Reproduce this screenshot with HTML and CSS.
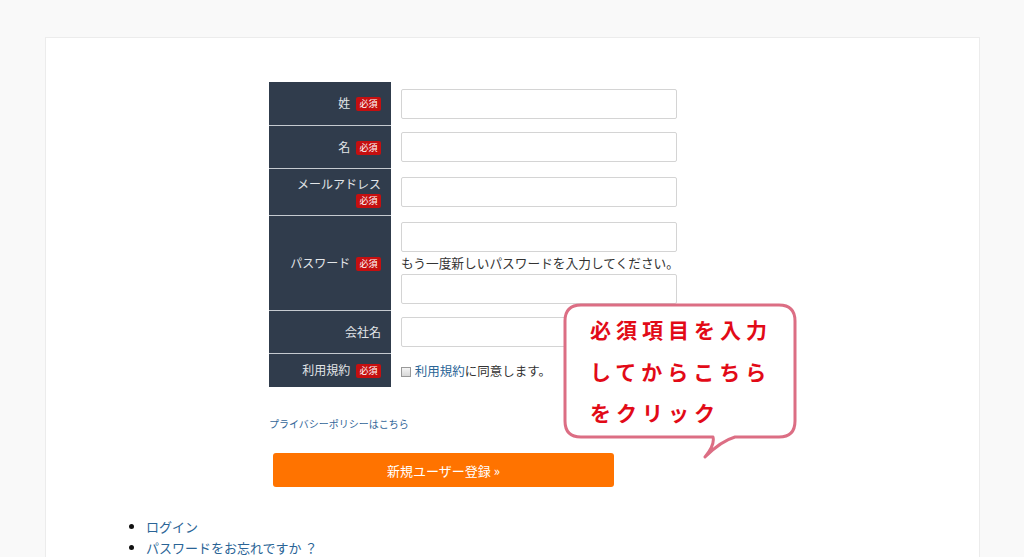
FILE: index.html
```html
<!DOCTYPE html>
<html lang="ja">
<head>
<meta charset="utf-8">
<title>新規ユーザー登録</title>
<link rel="stylesheet" href="styles.css">
</head>
<body>
<div class="card">
  <div class="form-wrap">
    <table class="reg-table">
      <tr>
        <th>姓 <span class="req">必須</span></th>
        <td><input class="text-input" type="text"></td>
      </tr>
      <tr>
        <th>名 <span class="req">必須</span></th>
        <td><input class="text-input" type="text"></td>
      </tr>
      <tr>
        <th>メールアドレス <span class="req">必須</span></th>
        <td><input class="text-input" type="text"></td>
      </tr>
      <tr>
        <th>パスワード <span class="req">必須</span></th>
        <td>
          <input class="text-input" type="password">
          <p class="hint">もう一度新しいパスワードを入力してください。</p>
          <input class="text-input" type="password">
        </td>
      </tr>
      <tr>
        <th>会社名</th>
        <td><input class="text-input" type="text"></td>
      </tr>
      <tr>
        <th>利用規約 <span class="req">必須</span></th>
        <td class="agree"><span class="check"></span> <a class="link" href="#">利用規約</a>に同意します。</td>
      </tr>
    </table>
    <p class="privacy"><a href="#">プライバシーポリシーはこちら</a></p>
    <button class="submit" type="button">新規ユーザー登録 »</button>

    <div class="bubble">
      <svg class="bubble-shape" width="236" height="158" viewBox="0 0 236 158">
        <path d="M18 2 H216 Q232 2 232 18 V118 Q232 134 216 134 H172 Q158 138 142 154 Q152 142 150 134 H18 Q2 134 2 118 V18 Q2 2 18 2 Z" fill="#fff" stroke="#dc6e84" stroke-width="3" stroke-linejoin="round"/>
      </svg>
      <div class="bubble-text">必須項目を入力<br>してからこちら<br>をクリック</div>
    </div>
  </div>
  <ul class="links">
    <li><a href="#">ログイン</a></li>
    <li><a href="#">パスワードをお忘れですか ？</a></li>
  </ul>
</div>
</body>
</html>
```

FILE: styles.css
```css
html, body {
  margin: 0;
  padding: 0;
  background: #f9f9f9;
  font-family: "Noto Sans CJK JP", "Noto Sans", sans-serif;
  color: #333;
}

.card {
  margin: 37px 44px 0 45px;
  background: #fff;
  border: 1px solid #ececec;
  padding-top: 44px;
  min-height: 560px;
  box-sizing: border-box;
}

.form-wrap {
  position: relative;
  margin-left: 223px;
  width: 420px;
}

.reg-table {
  border-collapse: collapse;
  border-spacing: 0;
}

.reg-table th {
  width: 102px;
  background: #303c4c;
  color: #e2e5e8;
  font-weight: normal;
  font-size: 12px;
  line-height: 16px;
  text-align: right;
  padding: 7px 10px;
  border-bottom: 1px solid #c5cad0;
  vertical-align: middle;
}

.reg-table tr:last-child th {
  border-bottom: none;
}

.reg-table td {
  padding: 7px 10px 6px;
  vertical-align: middle;
  font-size: 12.5px;
}

.req {
  display: inline-block;
  background: #c50f10;
  color: #fff;
  font-size: 9px;
  line-height: 14px;
  padding: 0 3.5px;
  border-radius: 2px;
  margin-left: 3px;
  vertical-align: 1px;
}

.text-input {
  display: block;
  box-sizing: border-box;
  width: 276px;
  height: 30px;
  border: 1px solid #d4d4d4;
  border-radius: 2px;
  margin: 0;
  background: #fff;
}

.hint {
  margin: 0;
  font-size: 12.7px;
  line-height: 22px;
  color: #333;
  white-space: nowrap;
}

.agree {
  line-height: 21px;
  white-space: nowrap;
}

.check {
  display: inline-block;
  width: 8px;
  height: 8px;
  border: 1px solid #999;
  background: linear-gradient(#f4f4f4, #d8d8d8);
  vertical-align: -1px;
  margin-right: 1px;
}

.link {
  color: #2a6496;
  text-decoration: none;
}

.privacy {
  margin: 30px 0 0 0;
  font-size: 10px;
  line-height: 14px;
}

.privacy a {
  color: #336699;
  text-decoration: none;
}

.submit {
  display: block;
  margin: 22px 0 0 4px;
  width: 341px;
  height: 34px;
  border: none;
  border-radius: 3px;
  background: #ff7300;
  color: #fff;
  font-family: "Noto Sans CJK JP", "Noto Sans", sans-serif;
  font-size: 13px;
  padding: 0;
}

.bubble {
  position: absolute;
  left: 294px;
  top: 221px;
  width: 236px;
  height: 158px;
}

.bubble-shape {
  display: block;
}

.bubble-text {
  position: absolute;
  left: 27px;
  top: 6px;
  font-size: 21px;
  font-weight: bold;
  line-height: 41.5px;
  letter-spacing: 5px;
  color: #e20a17;
  white-space: nowrap;
}

.links {
  margin: 29px 0 0 0;
  padding-left: 100px;
  font-size: 13px;
  line-height: 21px;
  color: #111;
}

.links a {
  color: #2a6496;
  text-decoration: none;
}
```
